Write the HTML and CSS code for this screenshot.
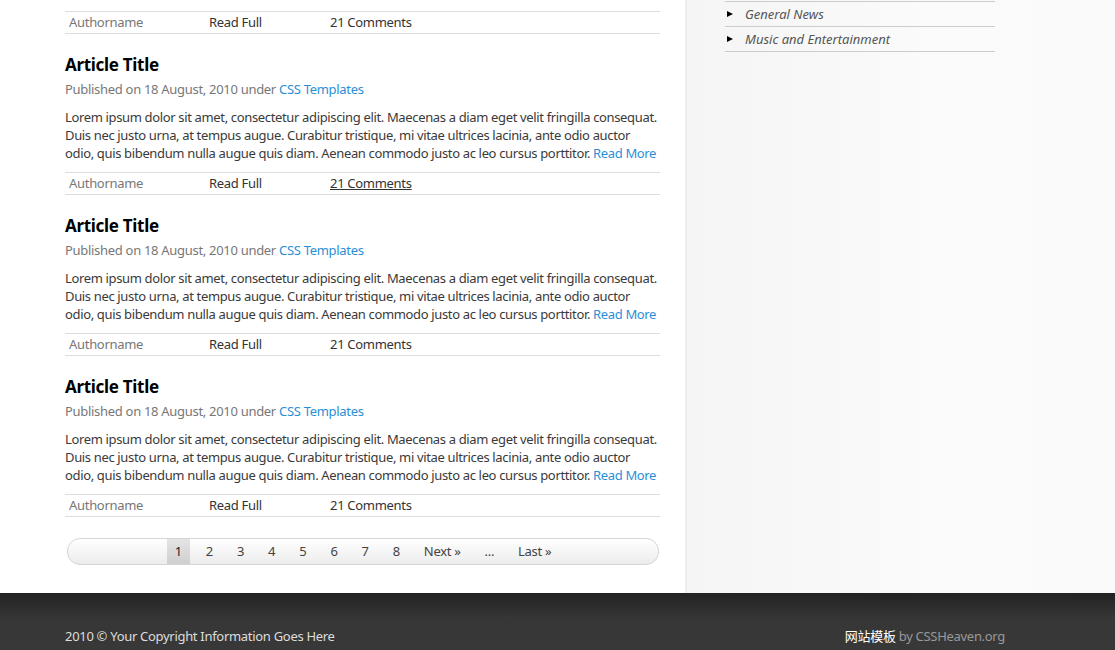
FILE: index.html
```html
<!DOCTYPE html>
<html lang="en">
<head>
  <meta charset="UTF-8">
  <meta name="viewport" content="width=device-width, initial-scale=1.0">
  <title>Blog</title>
  <link rel="stylesheet" href="styles.css">
</head>
<body>

  <div class="page">
    <div class="main">

      <div class="meta first">
        <span class="author">Authorname</span>
        <a href="#" class="full">Read Full</a>
        <a href="#" class="comments">21 Comments</a>
      </div>

      <div class="post">
        <h2>Article Title</h2>
        <p class="date">Published on 18 August, 2010 under <a href="#">CSS Templates</a></p>
        <p class="text">Lorem ipsum dolor sit amet, consectetur adipiscing elit. Maecenas a diam eget velit fringilla consequat. Duis nec justo urna, at tempus augue. Curabitur tristique, mi vitae ultrices lacinia, ante odio auctor odio, quis bibendum nulla augue quis diam. Aenean commodo justo ac leo cursus porttitor. <a href="#">Read More</a></p>
        <div class="meta">
          <span class="author">Authorname</span>
          <a href="#" class="full">Read Full</a>
          <a href="#" class="comments hover">21 Comments</a>
        </div>
      </div>

      <div class="post">
        <h2>Article Title</h2>
        <p class="date">Published on 18 August, 2010 under <a href="#">CSS Templates</a></p>
        <p class="text">Lorem ipsum dolor sit amet, consectetur adipiscing elit. Maecenas a diam eget velit fringilla consequat. Duis nec justo urna, at tempus augue. Curabitur tristique, mi vitae ultrices lacinia, ante odio auctor odio, quis bibendum nulla augue quis diam. Aenean commodo justo ac leo cursus porttitor. <a href="#">Read More</a></p>
        <div class="meta">
          <span class="author">Authorname</span>
          <a href="#" class="full">Read Full</a>
          <a href="#" class="comments">21 Comments</a>
        </div>
      </div>

      <div class="post">
        <h2>Article Title</h2>
        <p class="date">Published on 18 August, 2010 under <a href="#">CSS Templates</a></p>
        <p class="text">Lorem ipsum dolor sit amet, consectetur adipiscing elit. Maecenas a diam eget velit fringilla consequat. Duis nec justo urna, at tempus augue. Curabitur tristique, mi vitae ultrices lacinia, ante odio auctor odio, quis bibendum nulla augue quis diam. Aenean commodo justo ac leo cursus porttitor. <a href="#">Read More</a></p>
        <div class="meta">
          <span class="author">Authorname</span>
          <a href="#" class="full">Read Full</a>
          <a href="#" class="comments">21 Comments</a>
        </div>
      </div>

      <div class="pagination">
        <span class="current">1</span>
        <a href="#">2</a>
        <a href="#">3</a>
        <a href="#">4</a>
        <a href="#">5</a>
        <a href="#">6</a>
        <a href="#">7</a>
        <a href="#">8</a>
        <a href="#">Next &raquo;</a>
        <span>...</span>
        <a href="#">Last &raquo;</a>
      </div>
    </div>

    <div class="sidebar">
      <ul class="categories">
        <li><a href="#">General News</a></li>
        <li><a href="#">Music and Entertainment</a></li>
      </ul>
    </div>
  </div>

  <div class="footer">
    <p>2010 &copy; Your Copyright Information Goes Here</p>
    <p class="credit"><a href="#">网站模板</a> by CSSHeaven.org</p>
  </div>

</body>
</html>
```

FILE: styles.css
```css
body {
  font-family: 'Noto Sans', 'Noto Sans CJK SC', sans-serif;
  font-size: 13px;
  letter-spacing: -0.3px;
  color: #3a3a3a;
  background-color: #fff;
  margin: 0;
  padding: 0;
}

a {
  color: #2a8fd6;
  text-decoration: none;
}

.page {
  display: flex;
  min-height: 593px;
}

.main {
  width: 595px;
  padding: 11px 25px 28px 65px;
}

.meta {
  display: flex;
  height: 21px;
  line-height: 21px;
  border-top: 1px solid #ddd;
  border-bottom: 1px solid #ddd;
  padding-left: 4px;
  margin-top: 10px;
}

.meta.first {
  margin-top: 0;
}

.meta .author {
  width: 140px;
  color: #777;
}

.meta .full {
  width: 121px;
  color: #333;
}

.meta .comments {
  color: #333;
}

.meta .comments.hover {
  text-decoration: underline;
}

.post h2 {
  font-size: 17px;
  color: #000;
  margin: 20px 0 0;
  line-height: 22px;
}

.post .date {
  color: #777;
  margin: 4px 0 0;
  line-height: 18px;
}

.post .text {
  margin: 10px 0 0;
  padding-right: 1px;
  line-height: 18px;
  letter-spacing: -0.35px;
}

.pagination {
  margin: 21px 0 0 2px;
  width: 590px;
  height: 25px;
  border: 1px solid #d5d5d5;
  border-radius: 13px;
  background: linear-gradient(#fff, #ececec);
  display: flex;
  justify-content: center;
  gap: 8px;
}

.pagination a, .pagination span {
  padding: 0 8px;
  line-height: 25px;
  color: #444;
}

.pagination .current {
  background: linear-gradient(#e4e4e4, #cfcfcf);
  color: #222;
}

.sidebar {
  flex: 1;
  border-left: 2px solid #ededed;
  background: linear-gradient(to right, #f5f5f5, #fbfbfb 60%, #fafafa);
  padding-left: 38px;
}

.categories {
  list-style: none;
  margin: 1px 0 0;
  padding: 0;
  width: 270px;
  border-top: 1px solid #ccc;
}

.categories li {
  height: 24px;
  line-height: 24px;
  border-bottom: 1px solid #ccc;
  padding-left: 20px;
  position: relative;
}

.categories li::before {
  content: "";
  position: absolute;
  left: 2px;
  top: 9px;
  border-left: 6px solid #000;
  border-top: 3.5px solid transparent;
  border-bottom: 3.5px solid transparent;
}

.categories a {
  color: #555;
  font-style: italic;
  letter-spacing: 0;
}

.footer {
  background: linear-gradient(#222, #363636 25px, #3a3a3a);
  height: 80px;
  padding: 0 110px 0 65px;
  display: flex;
  justify-content: space-between;
  color: #ddd;
}

.footer p {
  margin: 35px 0 0;
  line-height: 16px;
}

.footer .credit {
  color: #999;
}

.footer .credit a {
  color: #fff;
}
```
